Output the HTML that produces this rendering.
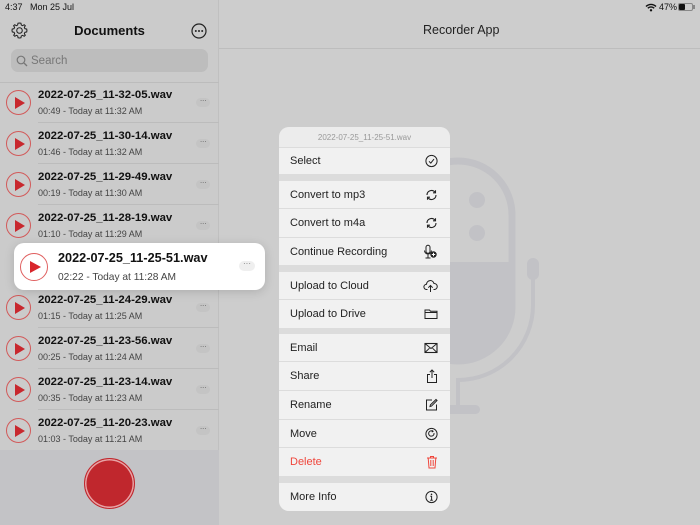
<!DOCTYPE html>
<html><head><meta charset="utf-8"><style>
*{margin:0;padding:0;box-sizing:border-box}
body{width:700px;height:525px;overflow:hidden;background:#cdcdcd;font-family:"Liberation Sans",sans-serif;position:relative;color:#111}
.abs{position:absolute}
.left{left:0;top:0;width:219px;height:525px;background:#cbcbcb;border-right:1px solid #c0c0c0}
.row{position:absolute;left:0;width:219px;height:41px}
.row .pc{position:absolute;left:6px;top:8px;width:25px;height:25px;border:1.3px solid #d25a5a;border-radius:50%}
.row .pc:after{content:"";position:absolute;left:8px;top:6px;border-left:10px solid #c8282e;border-top:6px solid transparent;border-bottom:6px solid transparent}
.row .t{position:absolute;left:38px;top:7px;font-size:11.4px;font-weight:bold;color:#111}
.row .s{position:absolute;left:38px;top:24px;font-size:9px;color:#444}
.row .d{position:absolute;left:196px;top:16px;width:14px;height:9px;border-radius:5px;background:#c4c4c4;font-size:8px;line-height:5px;text-align:center;color:#666;letter-spacing:-0.5px}
.row .ln{position:absolute;left:38px;right:0;bottom:0;height:1px;background:#bcbcbc}
.menu{left:279px;top:127px;width:171px;height:384px;background:#dcdcdc;border-radius:10px;overflow:hidden}
.mi{position:absolute;left:0;width:171px;background:#f1f1f1;font-size:11px;color:#222;padding-left:11px;border-bottom:1px solid #dcdcdc}
.mi svg{position:absolute;right:12px;top:50%;transform:translateY(-50%)}
</style></head><body>
<svg class="abs" style="left:390px;top:150px" width="160" height="275" viewBox="390 150 160 275">
<rect x="404" y="161" width="108" height="200" rx="54" fill="none" stroke="#c2c2c6" stroke-width="7"/>
<path d="M404 262 H512 V307 A54 54 0 0 1 404 307 Z" fill="#c2c2c6"/>
<circle cx="477" cy="200" r="8" fill="#c2c2c6"/>
<circle cx="477" cy="233" r="8" fill="#c2c2c6"/>
<path d="M533 275 V305 A75 75 0 0 1 458 380" fill="none" stroke="#c2c2c6" stroke-width="4"/>
<rect x="527" y="258" width="12" height="22" rx="6" fill="#c2c2c6"/>
<rect x="456" y="378" width="4" height="32" fill="#c2c2c6"/>
<rect x="430" y="405" width="50" height="9" rx="4.5" fill="#c2c2c6"/>
</svg>
<div class="abs" style="left:219px;top:48px;width:481px;height:1px;background:#bdbdbd"></div>
<div class="abs" style="left:423px;top:23px;font-size:12.5px;color:#222">Recorder App</div>
<div class="abs" style="left:659px;top:2px;font-size:9px;color:#111">47%</div>
<svg class="abs" style="left:645px;top:3px" width="12" height="9" viewBox="0 0 12 9"><path d="M1 3.5a7 7 0 0 1 10 0M2.8 5.3a4.5 4.5 0 0 1 6.4 0" stroke="#111" stroke-width="1.4" fill="none"/><circle cx="6" cy="7.3" r="1.2" fill="#111"/></svg>
<div class="abs" style="left:678px;top:3px;width:15px;height:8px;border:1px solid #888;border-radius:2px"><div style="width:6px;height:6px;background:#111;border-radius:1px"></div></div>
<div class="abs" style="left:693px;top:5px;width:2px;height:4px;background:#888"></div>

<div class="abs left">
<div class="abs" style="left:5px;top:2px;font-size:9px;color:#111">4:37&nbsp;&nbsp; Mon 25 Jul</div>
<svg class="abs" style="left:10px;top:21px" width="19" height="19" viewBox="0 0 24 24"><path d="M12 2.5l1.8.3.5 2.3 1.6.8 2-1.2 1.4 1.3-1.2 2 .7 1.7 2.3.5.3 1.8-.3 1.8-2.3.5-.7 1.7 1.2 2-1.4 1.3-2-1.2-1.6.8-.5 2.3-1.8.3-1.8-.3-.5-2.3-1.6-.8-2 1.2-1.4-1.3 1.2-2-.7-1.7-2.3-.5L2.5 12l.3-1.8 2.3-.5.7-1.7-1.2-2 1.4-1.3 2 1.2 1.6-.8.5-2.3z" fill="none" stroke="#222" stroke-width="1.3"/><circle cx="12" cy="12" r="3.5" fill="none" stroke="#222" stroke-width="1.3"/></svg>
<div class="abs" style="left:0;width:219px;top:23px;text-align:center;font-size:13px;font-weight:bold">Documents</div>
<svg class="abs" style="left:191px;top:23px" width="16" height="16" viewBox="0 0 16 16"><circle cx="8" cy="8" r="7" fill="none" stroke="#222" stroke-width="1.2"/><circle cx="4.8" cy="8" r="1" fill="#222"/><circle cx="8" cy="8" r="1" fill="#222"/><circle cx="11.2" cy="8" r="1" fill="#222"/></svg>
<div class="abs" style="left:11px;top:49px;width:197px;height:23px;background:#bdbdbd;border-radius:7px"></div>
<svg class="abs" style="left:16px;top:55px" width="12" height="12" viewBox="0 0 12 12"><circle cx="5" cy="5" r="3.8" fill="none" stroke="#777" stroke-width="1.2"/><path d="M8 8l3 3" stroke="#777" stroke-width="1.3"/></svg>
<div class="abs" style="left:31px;top:55px;font-size:11.5px;color:#777">Search</div>
<div class="abs" style="left:0;top:82px;width:219px;height:1px;background:#bcbcbc"></div>

<div class="row" style="top:82px"><div class="pc"></div><div class="t">2022-07-25_11-32-05.wav</div><div class="s">00:49 - Today at 11:32 AM</div><div class="d">···</div><div class="ln"></div></div>
<div class="row" style="top:123px"><div class="pc"></div><div class="t">2022-07-25_11-30-14.wav</div><div class="s">01:46 - Today at 11:32 AM</div><div class="d">···</div><div class="ln"></div></div>
<div class="row" style="top:164px"><div class="pc"></div><div class="t">2022-07-25_11-29-49.wav</div><div class="s">00:19 - Today at 11:30 AM</div><div class="d">···</div><div class="ln"></div></div>
<div class="row" style="top:205px"><div class="pc"></div><div class="t">2022-07-25_11-28-19.wav</div><div class="s">01:10 - Today at 11:29 AM</div><div class="d">···</div><div class="ln"></div></div>
<div class="row" style="top:287px"><div class="pc"></div><div class="t">2022-07-25_11-24-29.wav</div><div class="s">01:15 - Today at 11:25 AM</div><div class="d">···</div><div class="ln"></div></div>
<div class="row" style="top:328px"><div class="pc"></div><div class="t">2022-07-25_11-23-56.wav</div><div class="s">00:25 - Today at 11:24 AM</div><div class="d">···</div><div class="ln"></div></div>
<div class="row" style="top:369px"><div class="pc"></div><div class="t">2022-07-25_11-23-14.wav</div><div class="s">00:35 - Today at 11:23 AM</div><div class="d">···</div><div class="ln"></div></div>
<div class="row" style="top:410px"><div class="pc"></div><div class="t">2022-07-25_11-20-23.wav</div><div class="s">01:03 - Today at 11:21 AM</div><div class="d">···</div></div>

<div class="abs" style="left:0;top:450px;width:219px;height:75px;background:#c3c3c6"></div>
<div class="abs" style="left:84px;top:458px;width:51px;height:51px;border-radius:50%;background:#c0272d;border:1.5px solid #c0272d;box-shadow:inset 0 0 0 1.5px #e7a3a5"></div>
</div>

<div class="abs" style="left:14px;top:243px;width:251px;height:47px;background:#fff;border-radius:10px;box-shadow:0 2px 10px rgba(0,0,0,0.15)">
<div class="abs" style="left:6px;top:10px;width:28px;height:28px;border:1.3px solid #e06060;border-radius:50%"><div style="position:absolute;left:9px;top:7px;border-left:11px solid #d8262c;border-top:6.5px solid transparent;border-bottom:6.5px solid transparent"></div></div>
<div class="abs" style="left:44px;top:8px;font-size:12.7px;font-weight:bold;color:#111">2022-07-25_11-25-51.wav</div>
<div class="abs" style="left:44px;top:29px;font-size:10.2px;color:#444">02:22 - Today at 11:28 AM</div>
<div class="abs" style="left:225px;top:18px;width:16px;height:10px;border-radius:5px;background:#efefef;font-size:8px;line-height:6px;text-align:center;color:#777">···</div>
</div>

<div class="abs menu">
<div class="mi" style="top:0;height:21px;background:#ececec;padding:0;text-align:center;font-size:8px;color:#999;line-height:21px">2022-07-25_11-25-51.wav</div>
<div class="mi" style="top:21px;height:27px;line-height:27px">Select<svg width="13" height="13" viewBox="0 0 13 13"><circle cx="6.5" cy="6.5" r="5.6" fill="none" stroke="#222" stroke-width="1"/><path d="M4 6.8l1.8 1.8L9 4.6" fill="none" stroke="#222" stroke-width="1"/></svg></div>
<div class="mi" style="top:54px;height:28px;line-height:28px">Convert to mp3<svg width="13" height="13" viewBox="0 0 13 13"><path d="M2 6.5a4.5 4.5 0 0 1 8-2.8M11 6.5a4.5 4.5 0 0 1-8 2.8" fill="none" stroke="#222" stroke-width="1.1"/><path d="M10.5 1.8v2.5H8M2.5 11.2V8.7H5" fill="none" stroke="#222" stroke-width="1.1"/></svg></div>
<div class="mi" style="top:82px;height:29px;line-height:29px">Convert to m4a<svg width="13" height="13" viewBox="0 0 13 13"><path d="M2 6.5a4.5 4.5 0 0 1 8-2.8M11 6.5a4.5 4.5 0 0 1-8 2.8" fill="none" stroke="#222" stroke-width="1.1"/><path d="M10.5 1.8v2.5H8M2.5 11.2V8.7H5" fill="none" stroke="#222" stroke-width="1.1"/></svg></div>
<div class="mi" style="top:111px;height:28px;line-height:28px">Continue Recording<svg width="15" height="15" viewBox="0 0 15 15"><rect x="3" y="0.8" width="4" height="8" rx="2" fill="none" stroke="#222" stroke-width="1"/><path d="M1.5 6a3.5 3.5 0 0 0 7 0M5 10v3M2.5 13.5h5" fill="none" stroke="#222" stroke-width="1"/><circle cx="10.5" cy="10" r="3.2" fill="#222"/><path d="M10.5 8.3v3.4M8.8 10h3.4" stroke="#fff" stroke-width="1"/></svg></div>
<div class="mi" style="top:145px;height:28px;line-height:28px">Upload to Cloud<svg width="15" height="13" viewBox="0 0 15 13"><path d="M4.5 10H3.5a2.6 2.6 0 0 1 0-5.2A3.8 3.8 0 0 1 11 4a2.9 2.9 0 0 1 .5 6h-1" fill="none" stroke="#222" stroke-width="1"/><path d="M7.5 12.5V6M5.3 8.2l2.2-2.2 2.2 2.2" fill="none" stroke="#222" stroke-width="1"/></svg></div>
<div class="mi" style="top:173px;height:29px;line-height:29px">Upload to Drive<svg width="14" height="11" viewBox="0 0 14 11"><path d="M1 1.5h4.5l1 1.2H13V10H1z M1 4h12" fill="none" stroke="#222" stroke-width="1"/></svg></div>
<div class="mi" style="top:207px;height:28px;line-height:28px">Email<svg width="14" height="11" viewBox="0 0 14 11"><rect x="1" y="1" width="12" height="9" fill="none" stroke="#222" stroke-width="1.1"/><path d="M1 1l6 5 6-5M1 10l4.5-4.3M13 10l-4.5-4.3" fill="none" stroke="#222" stroke-width="1"/></svg></div>
<div class="mi" style="top:235px;height:29px;line-height:29px">Share<svg width="12" height="14" viewBox="0 0 12 14"><path d="M4 5.5H1.5v8h9v-8H8M6 9V1M3.8 3.2L6 1l2.2 2.2" fill="none" stroke="#222" stroke-width="1"/></svg></div>
<div class="mi" style="top:264px;height:29px;line-height:29px">Rename<svg width="13" height="13" viewBox="0 0 13 13"><path d="M7 1.5H1.5v10h10V6" fill="none" stroke="#222" stroke-width="1"/><path d="M5 8l.4-1.6L11 1l1 1-5.5 5.6z" fill="none" stroke="#222" stroke-width="1"/></svg></div>
<div class="mi" style="top:293px;height:28px;line-height:28px">Move<svg width="13" height="13" viewBox="0 0 13 13"><circle cx="6.5" cy="6.5" r="5.6" fill="none" stroke="#222" stroke-width="1"/><path d="M9 5.5a2.7 2.7 0 1 1-1.2-1.8M7.5 2.8l.5 1.2-1.3.4" fill="none" stroke="#222" stroke-width="1"/></svg></div>
<div class="mi" style="top:321px;height:29px;line-height:29px;color:#f0463c">Delete<svg width="12" height="14" viewBox="0 0 12 14"><path d="M1 3h10M4.5 3V1.5h3V3M2.2 3l.8 10h6l.8-10M4.8 5v6M7.2 5v6" fill="none" stroke="#f0463c" stroke-width="1"/></svg></div>
<div class="mi" style="top:356px;height:28px;line-height:28px;border:0">More Info<svg width="13" height="13" viewBox="0 0 13 13"><circle cx="6.5" cy="6.5" r="5.6" fill="none" stroke="#222" stroke-width="1"/><circle cx="6.5" cy="3.8" r=".8" fill="#222"/><path d="M5.3 5.8h1.3v3.8M5.2 9.7h2.6" fill="none" stroke="#222" stroke-width="1"/></svg></div>
</div>
</body></html>
